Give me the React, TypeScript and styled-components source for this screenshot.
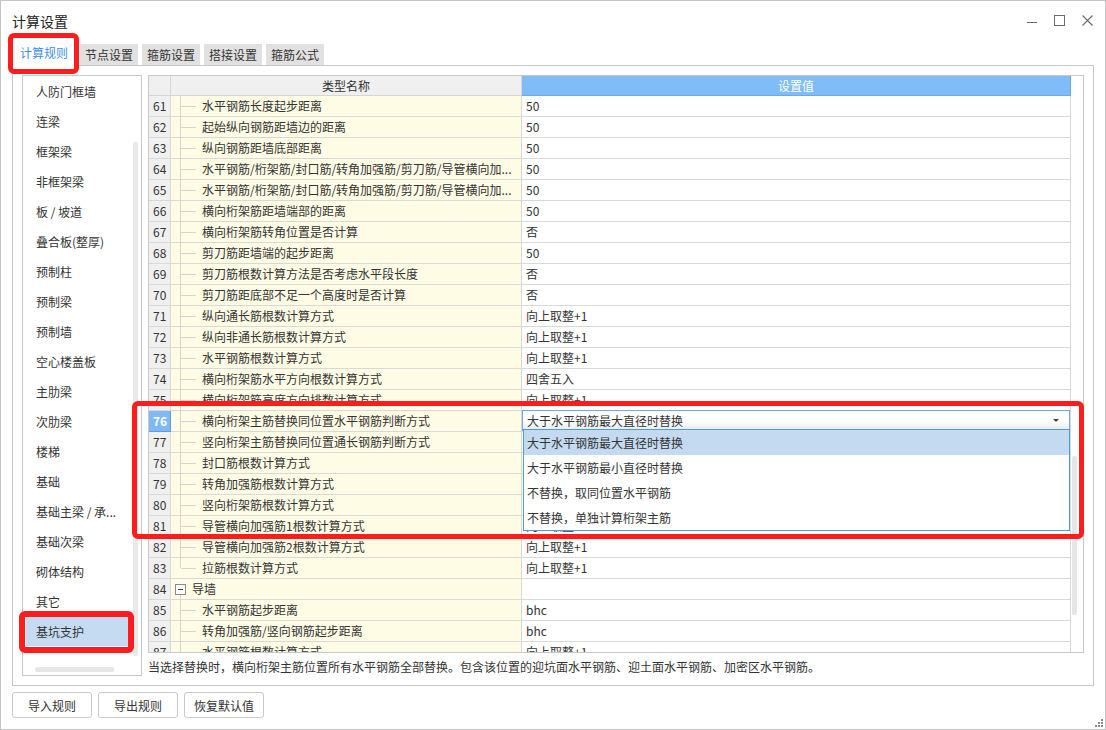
import React from 'react';
import styled, { createGlobalStyle, css } from 'styled-components';

const GlobalStyle = createGlobalStyle`
  html, body { margin: 0; padding: 0; background: #fff; }
  body {
    font-family: "Noto Sans CJK SC", "Noto Sans", sans-serif;
    font-size: 12px;
    color: #333;
  }
  * { box-sizing: border-box; }
`;

const Window = styled.div`
  position: relative;
  width: 1106px;
  height: 730px;
  border: 1px solid #c4c4c4;
  background: #fff;
  display: flex;
  flex-direction: column;
  padding: 0 11px;
  overflow: hidden;
`;

const TitleBar = styled.div`
  height: 39px;
  display: flex;
  align-items: center;
  justify-content: space-between;
`;

const Title = styled.div`
  font-size: 14px;
  color: #222;
  line-height: 20px;
`;

const Controls = styled.div`
  display: flex;
  align-items: center;
  gap: 17px;
  margin-right: 1px;
  color: #6b6b6b;
`;

const CtrlIcon = styled.svg`
  display: block;
`;

const TabRow = styled.div`
  height: 26px;
  display: flex;
  align-items: flex-end;
  gap: 4px;
  position: relative;
  z-index: 1;
  margin-bottom: -1px;
`;

const Tab = styled.div<{ $active?: boolean }>`
  height: 21px;
  padding: 0 5px;
  display: flex;
  align-items: center;
  font-size: 12px;
  line-height: 16px;
  color: #333;
  background: #e1e1e1;
  margin-bottom: 1px;
  ${(p) =>
    p.$active &&
    css`
      height: 26px;
      margin-bottom: 0;
      padding: 0 8px;
      color: #3d8fe6;
      background: #fff;
    `}
`;

const Panel = styled.div`
  height: 621px;
  border: 1px solid #c8c8c8;
  padding: 9px;
  display: flex;
  gap: 6px;
`;

const SideList = styled.div`
  position: relative;
  width: 120px;
  height: 601px;
  border: 1px solid #c8c8c8;
  overflow: hidden;
`;

const SideItem = styled.div<{ $selected?: boolean }>`
  height: 30px;
  margin: 0 12px 0 3px;
  padding-left: 10px;
  display: flex;
  align-items: center;
  white-space: nowrap;
  color: #333;
  background: ${(p) => (p.$selected ? '#c5dbf1' : 'transparent')};
`;

const VScrollThumb = styled.div`
  position: absolute;
  right: 3px;
  top: 66px;
  width: 5px;
  height: 514px;
  border-radius: 2px;
  background: #e9e9e9;
`;

const HScrollThumb = styled.div`
  position: absolute;
  left: 12px;
  bottom: 3px;
  width: 79px;
  height: 5px;
  border-radius: 2px;
  background: #e6e6e6;
`;

const RightCol = styled.div`
  flex: 1;
  display: flex;
  flex-direction: column;
`;

const Table = styled.div`
  height: 578px;
  border: 1px solid #c8c8c8;
  display: flex;
  overflow: hidden;
`;

const Grid = styled.div`
  width: 922px;
  display: flex;
  flex-direction: column;
`;

const HeaderRow = styled.div`
  display: grid;
  grid-template-columns: 22px 351px 549px;
  height: 20px;
  flex-shrink: 0;
`;

const HeaderCell = styled.div<{ $blue?: boolean }>`
  display: flex;
  align-items: center;
  justify-content: center;
  background: ${(p) => (p.$blue ? '#80bcf8' : '#f0f0f0')};
  color: ${(p) => (p.$blue ? '#fff' : '#333')};
  border-right: 1px solid ${(p) => (p.$blue ? '#6aa9ec' : '#d6d6d6')};
  border-bottom: 1px solid ${(p) => (p.$blue ? '#6aa9ec' : '#d6d6d6')};
  line-height: 16px;
`;

const Row = styled.div`
  display: grid;
  grid-template-columns: 22px 351px 549px;
  height: 21px;
  flex-shrink: 0;
`;

const cellBase = css`
  border-right: 1px solid #d8d8d8;
  border-bottom: 1px solid #d8d8d8;
  display: flex;
  align-items: center;
  line-height: 16px;
  white-space: nowrap;
  min-width: 0;
`;

const NumCell = styled.div<{ $active?: boolean }>`
  ${cellBase};
  padding-left: 4px;
  background: ${(p) => (p.$active ? '#7fbaf6' : '#f0f0f0')};
  color: ${(p) => (p.$active ? '#fff' : '#333')};
  font-weight: ${(p) => (p.$active ? 700 : 400)};
  ${(p) => p.$active && css`border-color: #5d9de2;`}
`;

const NameCell = styled.div`
  ${cellBase};
  background: #fffce6;
  overflow: hidden;
`;

const ValueCell = styled.div`
  ${cellBase};
  position: relative;
  padding-left: 4px;
  background: #fff;
`;

const Connector = styled.span<{ $last?: boolean }>`
  position: relative;
  width: 31px;
  height: 100%;
  flex-shrink: 0;
  &::before {
    content: '';
    position: absolute;
    left: 9px;
    top: 0;
    bottom: ${(p) => (p.$last ? '50%' : '0')};
    width: 1px;
    background: #d4d4d4;
  }
  &::after {
    content: '';
    position: absolute;
    left: 10px;
    width: 15px;
    top: 50%;
    height: 1px;
    background: #d4d4d4;
  }
`;

const GroupToggle = styled.span`
  position: relative;
  width: 11px;
  height: 11px;
  margin: 0 6px 0 4px;
  border: 1px solid #8a8a8a;
  flex-shrink: 0;
  background: #fff;
  &::before {
    content: '';
    position: absolute;
    left: 2px;
    right: 2px;
    top: 4px;
    height: 1px;
    background: #444;
  }
`;

const GroupStem = styled.span`
  position: absolute;
  left: 9px;
  top: 15px;
  bottom: 0;
  width: 1px;
  background: #d4d4d4;
`;

const NameText = styled.span`
  overflow: hidden;
  text-overflow: ellipsis;
  color: #333;
`;

const Combo = styled.div`
  position: absolute;
  top: -1px;
  left: 0;
  right: 0;
  bottom: 0;
  z-index: 2;
  border: 1px solid #70a9e2;
  background: linear-gradient(#ffffff 55%, #e8e8e8);
  display: flex;
  align-items: center;
  justify-content: space-between;
  padding: 0 10px 0 4px;
`;

const Arrow = styled.span`
  width: 0;
  height: 0;
  border-left: 3px solid transparent;
  border-right: 3px solid transparent;
  border-top: 3px solid #444;
`;

const DropList = styled.div`
  position: absolute;
  top: 18px;
  left: 1px;
  right: 0;
  height: 102px;
  z-index: 3;
  border: 1px solid #47a1d6;
  background: #fff;
  display: flex;
  flex-direction: column;
`;

const DropOption = styled.div<{ $selected?: boolean }>`
  height: 25px;
  display: flex;
  align-items: center;
  padding-left: 3px;
  color: #333;
  background: ${(p) => (p.$selected ? '#c3daf1' : '#fff')};
`;

const ScrollCol = styled.div`
  width: 12px;
  padding: 380px 0 0 1px;
`;

const ScrollThumb = styled.div`
  width: 5px;
  height: 159px;
  border-radius: 2px;
  background: #e6e6e6;
`;

const Description = styled.div`
  margin-top: 5px;
  height: 18px;
  line-height: 18px;
  color: #333;
  white-space: nowrap;
`;

const ButtonRow = styled.div`
  display: flex;
  gap: 6px;
  margin-top: 6px;
`;

const Button = styled.button`
  width: 80px;
  height: 26px;
  border: 1px solid #c9c9c9;
  border-radius: 3px;
  background: #fff;
  font-family: inherit;
  font-size: 12px;
  color: #333;
  padding: 0;
`;

const Annotation = styled.div<{ $x: number; $y: number; $w: number; $h: number; $t: number }>`
  position: absolute;
  left: ${(p) => p.$x}px;
  top: ${(p) => p.$y}px;
  width: ${(p) => p.$w}px;
  height: ${(p) => p.$h}px;
  border: ${(p) => p.$t}px solid #ff1c1c;
  border-radius: 6px;
  z-index: 10;
  pointer-events: none;
`;

const Grip = styled.svg`
  position: absolute;
  right: 2px;
  bottom: 2px;
`;

type RowData = {
  n: number;
  name: string;
  value: string;
  kind?: 'group' | 'last' | 'child2';
  combo?: boolean;
};

const rows: RowData[] = [
  { n: 61, name: '水平钢筋长度起步距离', value: '50' },
  { n: 62, name: '起始纵向钢筋距墙边的距离', value: '50' },
  { n: 63, name: '纵向钢筋距墙底部距离', value: '50' },
  { n: 64, name: '水平钢筋/桁架筋/封口筋/转角加强筋/剪刀筋/导管横向加...', value: '50' },
  { n: 65, name: '水平钢筋/桁架筋/封口筋/转角加强筋/剪刀筋/导管横向加...', value: '50' },
  { n: 66, name: '横向桁架筋距墙端部的距离', value: '50' },
  { n: 67, name: '横向桁架筋转角位置是否计算', value: '否' },
  { n: 68, name: '剪刀筋距墙端的起步距离', value: '50' },
  { n: 69, name: '剪刀筋根数计算方法是否考虑水平段长度', value: '否' },
  { n: 70, name: '剪刀筋距底部不足一个高度时是否计算', value: '否' },
  { n: 71, name: '纵向通长筋根数计算方式', value: '向上取整+1' },
  { n: 72, name: '纵向非通长筋根数计算方式', value: '向上取整+1' },
  { n: 73, name: '水平钢筋根数计算方式', value: '向上取整+1' },
  { n: 74, name: '横向桁架筋水平方向根数计算方式', value: '四舍五入' },
  { n: 75, name: '横向桁架筋高度方向排数计算方式', value: '向上取整+1' },
  { n: 76, name: '横向桁架主筋替换同位置水平钢筋判断方式', value: '大于水平钢筋最大直径时替换', combo: true },
  { n: 77, name: '竖向桁架主筋替换同位置通长钢筋判断方式', value: '大于通长钢筋最大直径时替换' },
  { n: 78, name: '封口筋根数计算方式', value: '向上取整+1' },
  { n: 79, name: '转角加强筋根数计算方式', value: '向上取整+1' },
  { n: 80, name: '竖向桁架筋根数计算方式', value: '向上取整+1' },
  { n: 81, name: '导管横向加强筋1根数计算方式', value: '向上取整+1' },
  { n: 82, name: '导管横向加强筋2根数计算方式', value: '向上取整+1' },
  { n: 83, name: '拉筋根数计算方式', value: '向上取整+1', kind: 'last' },
  { n: 84, name: '导墙', value: '', kind: 'group' },
  { n: 85, name: '水平钢筋起步距离', value: 'bhc' },
  { n: 86, name: '转角加强筋/竖向钢筋起步距离', value: 'bhc' },
  { n: 87, name: '水平钢筋根数计算方式', value: '向上取整+1' },
];

const sideItems = [
  '人防门框墙',
  '连梁',
  '框架梁',
  '非框架梁',
  '板 / 坡道',
  '叠合板(整厚)',
  '预制柱',
  '预制梁',
  '预制墙',
  '空心楼盖板',
  '主肋梁',
  '次肋梁',
  '楼梯',
  '基础',
  '基础主梁 / 承...',
  '基础次梁',
  '砌体结构',
  '其它',
  '基坑支护',
];

const tabs = ['计算规则', '节点设置', '箍筋设置', '搭接设置', '箍筋公式'];

const options = [
  '大于水平钢筋最大直径时替换',
  '大于水平钢筋最小直径时替换',
  '不替换，取同位置水平钢筋',
  '不替换，单独计算桁架主筋',
];

function NameContent({ row }: { row: RowData }) {
  if (row.kind === 'group') {
    return (
      <>
        <GroupStem />
        <GroupToggle />
        <NameText>{row.name}</NameText>
      </>
    );
  }
  return (
    <>
      <Connector $last={row.kind === 'last'} />
      <NameText>{row.name}</NameText>
    </>
  );
}

export default function App() {
  return (
    <>
      <GlobalStyle />
      <Window>
        <TitleBar>
          <Title>计算设置</Title>
          <Controls>
            <CtrlIcon width="10" height="11" viewBox="0 0 10 11">
              <line x1="0" y1="7.5" x2="10" y2="7.5" stroke="currentColor" strokeWidth="1" />
            </CtrlIcon>
            <CtrlIcon width="11" height="11" viewBox="0 0 11 11">
              <rect x="0.5" y="0.5" width="10" height="10" fill="none" stroke="currentColor" strokeWidth="1" />
            </CtrlIcon>
            <CtrlIcon width="11" height="11" viewBox="0 0 11 11">
              <path d="M0.5 0.5 L10.5 10.5 M10.5 0.5 L0.5 10.5" stroke="currentColor" strokeWidth="1.1" fill="none" />
            </CtrlIcon>
          </Controls>
        </TitleBar>

        <TabRow>
          {tabs.map((t, i) => (
            <Tab key={t} $active={i === 0}>
              {t}
            </Tab>
          ))}
        </TabRow>

        <Panel>
          <SideList>
            {sideItems.map((s) => (
              <SideItem key={s} $selected={s === '基坑支护'}>
                {s}
              </SideItem>
            ))}
            <VScrollThumb />
            <HScrollThumb />
          </SideList>

          <RightCol>
            <Table>
              <Grid>
                <HeaderRow>
                  <HeaderCell />
                  <HeaderCell>类型名称</HeaderCell>
                  <HeaderCell $blue>设置值</HeaderCell>
                </HeaderRow>
                {rows.map((r) => (
                  <Row key={r.n}>
                    <NumCell $active={r.combo}>{r.n}</NumCell>
                    <NameCell style={r.kind === 'group' ? { position: 'relative' } : undefined}>
                      <NameContent row={r} />
                    </NameCell>
                    <ValueCell>
                      {r.combo ? (
                        <>
                          <Combo>
                            <span>{r.value}</span>
                            <Arrow />
                          </Combo>
                          <DropList>
                            {options.map((o, i) => (
                              <DropOption key={o} $selected={i === 0}>
                                {o}
                              </DropOption>
                            ))}
                          </DropList>
                        </>
                      ) : (
                        r.value
                      )}
                    </ValueCell>
                  </Row>
                ))}
              </Grid>
              <ScrollCol>
                <ScrollThumb />
              </ScrollCol>
            </Table>
            <Description>
              当选择替换时，横向桁架主筋位置所有水平钢筋全部替换。包含该位置的迎坑面水平钢筋、迎土面水平钢筋、加密区水平钢筋。
            </Description>
          </RightCol>
        </Panel>

        <ButtonRow>
          <Button>导入规则</Button>
          <Button>导出规则</Button>
          <Button>恢复默认值</Button>
        </ButtonRow>

        <Annotation $x={7} $y={32} $w={71} $h={41} $t={5} />
        <Annotation $x={131} $y={400} $w={952} $h={138} $t={5} />
        <Annotation $x={18} $y={610} $w={115} $h={42} $t={6} />

        <Grip width="8" height="8" viewBox="0 0 8 8">
          <g fill="#8a8a8a">
            <rect x="6" y="0" width="2" height="2" />
            <rect x="3" y="3" width="2" height="2" />
            <rect x="6" y="3" width="2" height="2" />
            <rect x="0" y="6" width="2" height="2" />
            <rect x="3" y="6" width="2" height="2" />
            <rect x="6" y="6" width="2" height="2" />
          </g>
        </Grip>
      </Window>
    </>
  );
}
